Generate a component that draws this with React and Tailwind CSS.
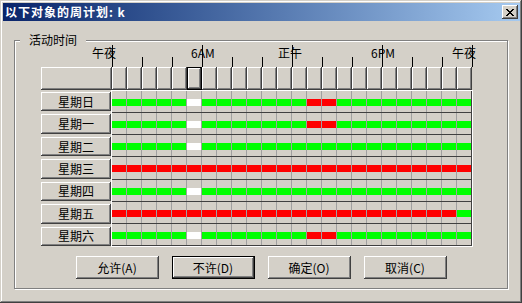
/**
 * Weekly schedule dialog — classic Windows look.
 */
const DAYS = ['星期日', '星期一', '星期二', '星期三', '星期四', '星期五', '星期六'];
const HOURS = Array.from({ length: 24 }, (_, i) => i);

// g = allowed (green), r = denied (red)
const SCHEDULE = [
  'gggggggggggggrrggggggggg',
  'gggggggggggggrrggggggggg',
  'gggggggggggggggggggggggg',
  'rrrrrrrrrrrrrrrrrrrrrrrr',
  'gggggggggggggggggggggggg',
  'rrrrrrrrrrrrrrrrrrrrrrrg',
  'gggggggggggggrrggggggggg',
];

const SELECTED_HOUR = 5;

const BAR = {
  g: 'bg-[#00ff00]',
  r: 'bg-[#ff0000]',
  w: 'bg-white',
};

const raised =
  'shadow-[inset_-1px_-1px_0_#404040,inset_1px_1px_0_#ffffff,inset_-2px_-2px_0_#808080,inset_2px_2px_0_#d4d0c8]';

// tick labels on the ruler, x relative to the schedule block
const LABELS = [
  { text: '午夜', left: 51 },
  { text: '6AM', left: 150 },
  { text: '正午', left: 237 },
  { text: '6PM', left: 330 },
  { text: '午夜', left: 411 },
];

function CloseGlyph() {
  return (
    <svg width="8" height="7" viewBox="0 0 8 7" shapeRendering="crispEdges">
      <path
        fill="#000"
        d="M0 0h2v1H0zM6 0h2v1H6zM1 1h2v1H1zM5 1h2v1H5zM2 2h4v1H2zM3 3h2v1H3zM2 4h4v1H2zM1 5h2v1H1zM5 5h2v1H5zM0 6h2v1H0zM6 6h2v1H6z"
      />
    </svg>
  );
}

function Ruler() {
  return (
    <div className="relative h-[22px]">
      {Array.from({ length: 13 }, (_, k) => (
        <div
          key={k}
          className={`absolute w-px bg-black ${k % 3 === 0 ? 'top-0 h-[22px]' : 'top-[12px] h-[10px]'}`}
          style={{ left: 71 + k * 30 }}
        />
      ))}
      {LABELS.map((l, i) => (
        <span
          key={i}
          className="absolute top-[1px] text-[12px] leading-[14px] text-black whitespace-nowrap"
          style={{ left: l.left }}
        >
          {l.text}
        </span>
      ))}
    </div>
  );
}

function DialogButton({ label, isDefault }) {
  return (
    <button
      className={`w-[83px] h-[23px] flex items-center justify-center text-[12px] text-black ${raised} ${
        isDefault ? 'border border-black' : ''
      }`}
    >
      {label}
    </button>
  );
}

export default function App() {
  return (
    <div className="w-[522px] h-[303px] bg-[#d4d0c8] pl-[3px] pr-[2px] pt-[3px] font-['Noto_Sans_CJK_SC',sans-serif] shadow-[inset_-1px_-1px_0_#404040,inset_1px_1px_0_#d4d0c8,inset_-2px_-2px_0_#808080,inset_2px_2px_0_#ffffff] overflow-hidden">
      {/* Title bar */}
      <div className="h-[18px] bg-linear-to-r from-[#0a246a] to-[#a6caf0] flex items-center pl-[2px] pr-[2px]">
        <span className="text-white text-[12px] font-bold tracking-[1px] leading-none">
          以下对象的周计划: k
        </span>
        <div className={`ml-auto w-[16px] h-[14px] bg-[#d4d0c8] flex items-center justify-center ${raised}`}>
          <CloseGlyph />
        </div>
      </div>

      {/* Group box */}
      <div className="relative ml-[11px] mt-[19px] w-[494px] h-[249px] border border-[#808080] shadow-[inset_1px_1px_0_#ffffff,1px_1px_0_#ffffff]">
        <span className="absolute -top-[8px] left-[5px] px-[9px] bg-[#d4d0c8] text-[12px] leading-[14px] text-black">
          活动时间
        </span>

        <div className="ml-[26px] mt-[4px] w-[432px]">
          <Ruler />

          {/* Hour header */}
          <div className="flex h-[23px]">
            <div className={`w-[71px] ${raised}`} />
            {HOURS.map(h => (
              <div
                key={h}
                className={`w-[15px] ${raised} ${h === SELECTED_HOUR ? 'border border-black' : ''}`}
              />
            ))}
          </div>

          {/* Days + grid */}
          <div className="flex h-[157px]">
            <div className="w-[70px] flex flex-col">
              {DAYS.map(d => (
                <div key={d} className="flex-1 pt-[2px] pb-[1px] flex">
                  <div className={`flex-1 flex items-center justify-center text-[12px] text-black ${raised}`}>
                    {d}
                  </div>
                </div>
              ))}
            </div>
            <div className="w-[362px] flex flex-col border-l border-t border-r border-b border-white">
              {SCHEDULE.map((row, r) => (
                <div key={r} className="flex-1 flex border-b border-[#404040]">
                  {HOURS.map(h => {
                    const c = row[h] === 'g' && h === SELECTED_HOUR ? 'w' : row[h];
                    return (
                      <div
                        key={h}
                        className={`w-[15px] flex items-center pt-[2px] border-r ${
                          h === 23 ? 'border-[#404040]' : 'border-[#a0a0a0]'
                        }`}
                      >
                        <div className={`w-full h-[7px] ${BAR[c]}`} />
                      </div>
                    );
                  })}
                </div>
              ))}
            </div>
          </div>
        </div>

        {/* Buttons */}
        <div className="flex justify-center gap-[13px] mt-[9px]">
          <DialogButton label="允许(A)" />
          <DialogButton label="不许(D)" isDefault />
          <DialogButton label="确定(O)" />
          <DialogButton label="取消(C)" />
        </div>
      </div>
    </div>
  );
}
